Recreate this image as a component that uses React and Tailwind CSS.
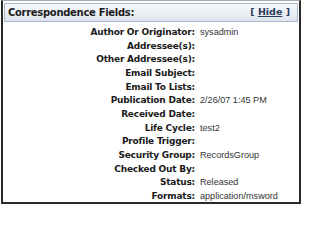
import React from 'react';

const fields = [
	['Author Or Originator:', 'sysadmin'],
	['Addressee(s):', ''],
	['Other Addressee(s):', ''],
	['Email Subject:', ''],
	['Email To Lists:', ''],
	['Publication Date:', '2/26/07 1:45 PM'],
	['Received Date:', ''],
	['Life Cycle:', 'test2'],
	['Profile Trigger:', ''],
	['Security Group:', 'RecordsGroup'],
	['Checked Out By:', ''],
	['Status:', 'Released'],
	['Formats:', 'application/msword'],
];

export default function App() {
	return (
		<div className="w-[302px] h-[206px] bg-white">
			<div className="ml-px w-[300px] h-[204px] border-t border-t-[#a8a8a8] border-x-2 border-b-2 border-x-[#2a2a2a] border-b-[#2a2a2a] px-px pt-[2px]">
				{/* section header */}
				<div className="h-[19px] flex items-center justify-between border border-[#aab8cb] bg-gradient-to-b from-[#f7f9fc] to-[#dfe5ee] pl-[3px] pr-[7px]">
					<span className="font-['DejaVu_Sans',sans-serif] font-bold text-[10px] text-[#1c1c1c] tracking-[-0.3px]">
						Correspondence Fields:
					</span>
					<span className="font-['DejaVu_Sans',sans-serif] font-bold text-[9.5px] text-[#2c3c5c]">
						[ <span className="underline">Hide</span> ]
					</span>
				</div>

				<div className="pt-[4px]">
					{fields.map(([label, value]) => (
						<div key={label} className="flex items-center h-[13.67px]">
							<div className="w-[191px] text-right font-['DejaVu_Sans',sans-serif] font-bold text-[9px] text-[#1a1a1a] tracking-[-0.2px] whitespace-nowrap">
								{label}
							</div>
							<div className="pl-[5px] font-['Liberation_Sans',Arial,sans-serif] text-[9.1px] text-[#333] whitespace-nowrap">
								{value}
							</div>
						</div>
					))}
				</div>
			</div>
		</div>
	);
}
